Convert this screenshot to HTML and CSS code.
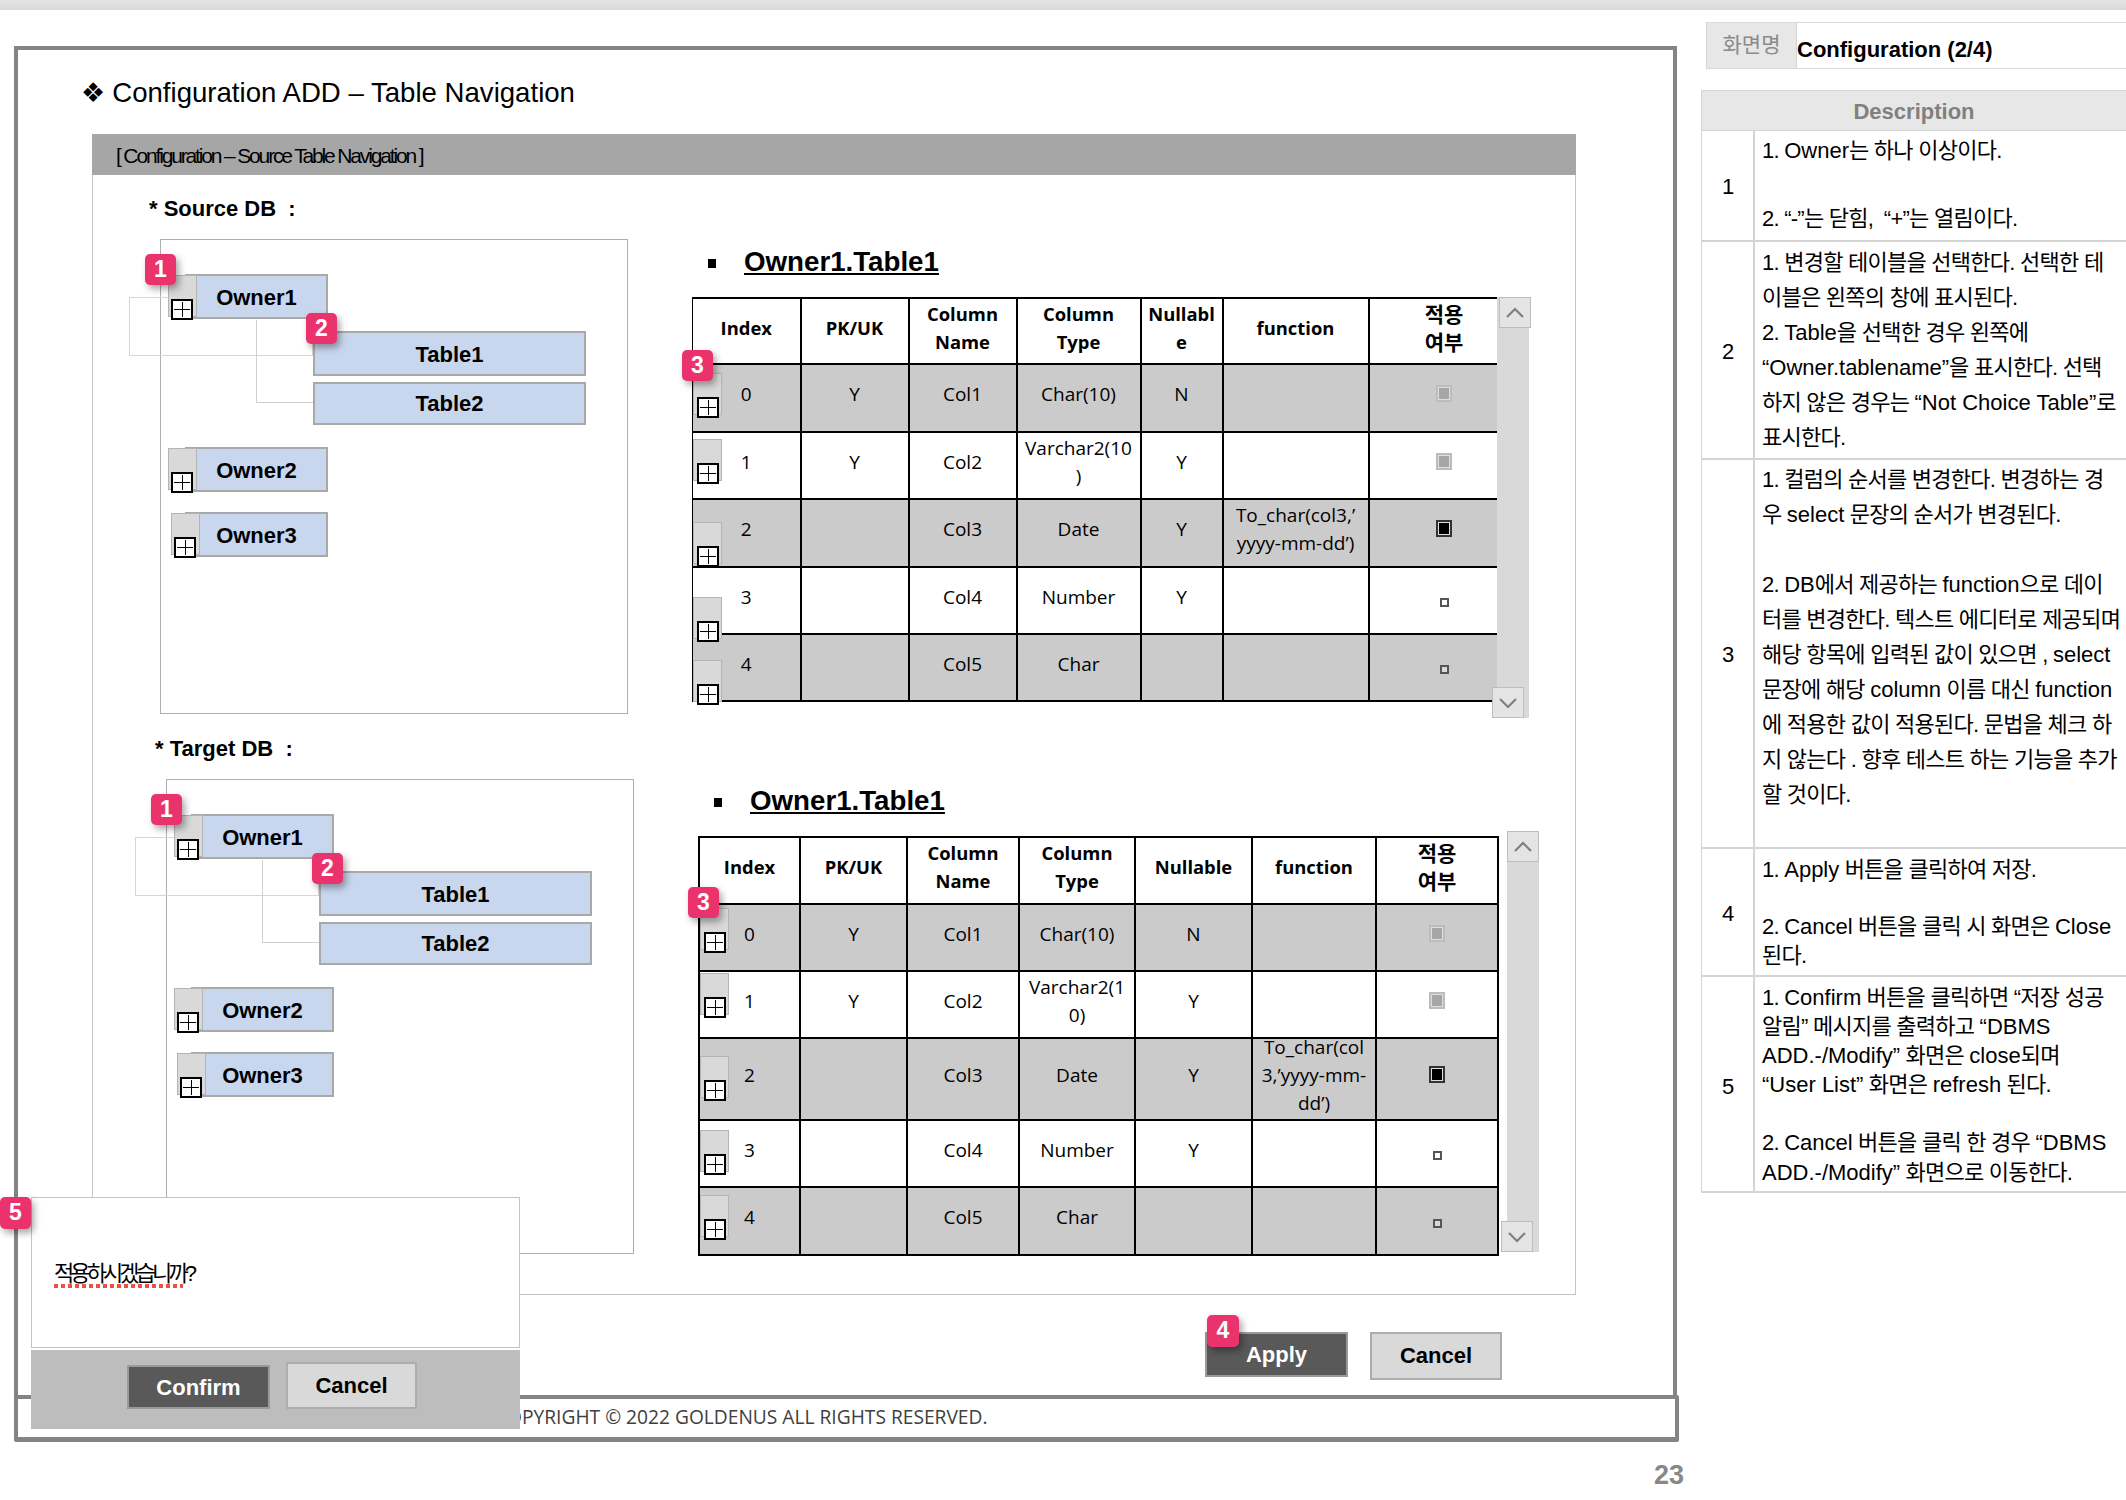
FILE: index.html
```html
<!DOCTYPE html>
<html lang="ko">
<head>
    <meta charset="UTF-8">
    <meta name="viewport" content="width=device-width, initial-scale=1.0">
    <title>Configuration (2/4)</title>
    <link rel="stylesheet" href="styles.css">
</head>
<body>
    <div class="topbar"></div>

    <div class="sheet">
        <div class="slide-wrap">
            <div class="slide">
                <h1 class="slide-title"><span class="diamond">❖</span>Configuration ADD – Table Navigation</h1>

                <div class="panel">
                    <div class="panel-head">[ Configuration – Source Table Navigation ]</div>
                    <div class="panel-body">

                        <div class="db-col">
                            <!-- Source DB -->
                            <section class="db-section">
                                <div class="db-label">* Source DB &nbsp;:</div>
                                <div class="tree">
                                    <span class="ghost-line"></span>
                                    <span class="branch-line"></span>
                                    <div class="node owner">Owner1
                                        <span class="expander"><span class="plus"></span></span>
                                        <span class="badge badge-tree1">1</span>
                                    </div>
                                    <div class="node sub first-sub">Table1
                                        <span class="badge badge-tree2">2</span>
                                    </div>
                                    <div class="node sub second-sub">Table2</div>
                                    <div class="node owner owner2">Owner2
                                        <span class="expander"><span class="plus"></span></span>
                                    </div>
                                    <div class="node owner owner3">Owner3
                                        <span class="expander"><span class="plus"></span></span>
                                    </div>
                                </div>
                            </section>

                            <!-- Target DB -->
                            <section class="db-section db-target">
                                <div class="db-label">* Target DB &nbsp;:</div>
                                <div class="tree">
                                    <span class="ghost-line"></span>
                                    <span class="branch-line"></span>
                                    <div class="node owner">Owner1
                                        <span class="expander"><span class="plus"></span></span>
                                        <span class="badge badge-tree1">1</span>
                                    </div>
                                    <div class="node sub first-sub">Table1
                                        <span class="badge badge-tree2">2</span>
                                    </div>
                                    <div class="node sub second-sub">Table2</div>
                                    <div class="node owner owner2">Owner2
                                        <span class="expander"><span class="plus"></span></span>
                                    </div>
                                    <div class="node owner owner3">Owner3
                                        <span class="expander"><span class="plus"></span></span>
                                    </div>
                                </div>
                            </section>
                        </div>

                        <div class="grid-col">
                            <!-- Source table -->
                            <section class="grid-section">
                                <h2 class="grid-title"><span class="bullet"></span><u>Owner1.Table1</u></h2>
                                <div class="grid-row">
                                    <table class="cols cols-source">
                                        <colgroup><col><col><col><col><col><col><col></colgroup>
                                        <tr class="head">
                                            <th>Index<span class="badge badge-grid">3</span></th><th>PK/UK</th><th>Column<br>Name</th><th>Column<br>Type</th><th>Nullabl<br>e</th><th>function</th><th class="kr">적용<br>여부</th>
                                        </tr>
                                        <tr class="shade">
                                            <td class="idx">0<span class="expander"><span class="plus"></span></span></td><td>Y</td><td>Col1</td><td>Char(10)</td><td>N</td><td></td><td><span class="chk chk-dim"></span></td>
                                        </tr>
                                        <tr>
                                            <td class="idx">1<span class="expander"><span class="plus"></span></span></td><td>Y</td><td>Col2</td><td>Varchar2(10<br>)</td><td>Y</td><td></td><td><span class="chk chk-dim"></span></td>
                                        </tr>
                                        <tr class="shade">
                                            <td class="idx">2<span class="expander"><span class="plus"></span></span></td><td></td><td>Col3</td><td>Date</td><td>Y</td><td>To_char(col3,’<br>yyyy-mm-dd’)</td><td><span class="chk chk-on"></span></td>
                                        </tr>
                                        <tr>
                                            <td class="idx">3<span class="expander"><span class="plus"></span></span></td><td></td><td>Col4</td><td>Number</td><td>Y</td><td></td><td><span class="chk chk-empty"></span></td>
                                        </tr>
                                        <tr class="shade">
                                            <td class="idx">4<span class="expander"><span class="plus"></span></span></td><td></td><td>Col5</td><td>Char</td><td></td><td></td><td><span class="chk chk-empty"></span></td>
                                        </tr>
                                    </table>
                                    <div class="scrollbar">
                                        <span class="scroll-btn scroll-up"><svg width="20" height="12" viewBox="0 0 20 12"><path d="M2 10 L10 2 L18 10" fill="none" stroke="#7f7f7f" stroke-width="2.2"/></svg></span>
                                        <span class="scroll-btn scroll-down"><svg width="20" height="12" viewBox="0 0 20 12"><path d="M2 2 L10 10 L18 2" fill="none" stroke="#7f7f7f" stroke-width="2.2"/></svg></span>
                                    </div>
                                </div>
                            </section>

                            <!-- Target table -->
                            <section class="grid-section grid-target">
                                <h2 class="grid-title"><span class="bullet"></span><u>Owner1.Table1</u></h2>
                                <div class="grid-row">
                                    <table class="cols cols-target">
                                        <colgroup><col><col><col><col><col><col><col></colgroup>
                                        <tr class="head">
                                            <th>Index<span class="badge badge-grid">3</span></th><th>PK/UK</th><th>Column<br>Name</th><th>Column<br>Type</th><th>Nullable</th><th>function</th><th class="kr">적용<br>여부</th>
                                        </tr>
                                        <tr class="shade">
                                            <td class="idx">0<span class="expander"><span class="plus"></span></span></td><td>Y</td><td>Col1</td><td>Char(10)</td><td>N</td><td></td><td><span class="chk chk-dim"></span></td>
                                        </tr>
                                        <tr>
                                            <td class="idx">1<span class="expander"><span class="plus"></span></span></td><td>Y</td><td>Col2</td><td>Varchar2(1<br>0)</td><td>Y</td><td></td><td><span class="chk chk-dim"></span></td>
                                        </tr>
                                        <tr class="shade">
                                            <td class="idx">2<span class="expander"><span class="plus"></span></span></td><td></td><td>Col3</td><td>Date</td><td>Y</td><td><div class="tall">To_char(col<br>3,’yyyy-mm-<br>dd’)</div></td><td><span class="chk chk-on"></span></td>
                                        </tr>
                                        <tr>
                                            <td class="idx">3<span class="expander"><span class="plus"></span></span></td><td></td><td>Col4</td><td>Number</td><td>Y</td><td></td><td><span class="chk chk-empty"></span></td>
                                        </tr>
                                        <tr class="shade">
                                            <td class="idx">4<span class="expander"><span class="plus"></span></span></td><td></td><td>Col5</td><td>Char</td><td></td><td></td><td><span class="chk chk-empty"></span></td>
                                        </tr>
                                    </table>
                                    <div class="scrollbar">
                                        <span class="scroll-btn scroll-up"><svg width="20" height="12" viewBox="0 0 20 12"><path d="M2 10 L10 2 L18 10" fill="none" stroke="#7f7f7f" stroke-width="2.2"/></svg></span>
                                        <span class="scroll-btn scroll-down"><svg width="20" height="12" viewBox="0 0 20 12"><path d="M2 2 L10 10 L18 2" fill="none" stroke="#7f7f7f" stroke-width="2.2"/></svg></span>
                                    </div>
                                </div>
                            </section>
                        </div>

                    </div>
                </div>

                <div class="actions">
                    <button class="btn btn-dark btn-apply">Apply<span class="badge badge-apply">4</span></button>
                    <button class="btn btn-light btn-cancel">Cancel</button>
                </div>
            </div>

            <div class="slide-foot">COPYRIGHT © 2022 GOLDENUS ALL RIGHTS RESERVED.</div>
            <div class="page-no">23</div>

            <!-- 확인 팝업 -->
            <div class="dialog">
                <span class="badge badge-dialog">5</span>
                <div class="dialog-body"><span class="dialog-text">적용하시겠습니까?</span></div>
                <div class="dialog-foot">
                    <button class="btn btn-dark btn-confirm">Confirm</button>
                    <button class="btn btn-light btn-dialog-cancel">Cancel</button>
                </div>
            </div>
        </div>

        <aside class="side">
            <div class="name-row">
                <div class="name-label">화면명</div>
                <div class="name-value">Configuration (2/4)</div>
            </div>

            <div class="desc-head">Description</div>

            <div class="desc-row desc-1">
                <div class="desc-no">1</div>
                <div class="desc-text">1. <span class="en">Owner</span>는 하나 이상이다.<br><br>2. “-”는 닫힘,&nbsp; “+”는 열림이다.</div>
            </div>
            <div class="desc-row desc-2">
                <div class="desc-no">2</div>
                <div class="desc-text">1. 변경할 테이블을 선택한다. 선택한 테<br>이블은 왼쪽의 창에 표시된다.<br>2. <span class="en">Table</span>을 선택한 경우 왼쪽에<br><span class="en">“Owner.tablename”</span>을 표시한다. 선택<br>하지 않은 경우는 <span class="en">“Not Choice Table”</span>로<br>표시한다.</div>
            </div>
            <div class="desc-row desc-3">
                <div class="desc-no">3</div>
                <div class="desc-text">1. 컬럼의 순서를 변경한다. 변경하는 경<br>우 <span class="en">select</span> 문장의 순서가 변경된다.<br><br>2. <span class="en">DB</span>에서 제공하는 <span class="en">function</span>으로 데이<br>터를 변경한다. 텍스트 에디터로 제공되며<br>해당 항목에 입력된 값이 있으면 , <span class="en">select</span><br>문장에 해당 <span class="en">column</span> 이름 대신 <span class="en">function</span><br>에 적용한 값이 적용된다. 문법을 체크 하<br>지 않는다 . 향후 테스트 하는 기능을 추가<br>할 것이다.</div>
            </div>
            <div class="desc-row desc-4">
                <div class="desc-no">4</div>
                <div class="desc-text">1. <span class="en">Apply</span> 버튼을 클릭하여 저장.<br><br>2. <span class="en">Cancel</span> 버튼을 클릭 시 화면은 <span class="en">Close</span><br>된다.</div>
            </div>
            <div class="desc-row desc-5">
                <div class="desc-no">5</div>
                <div class="desc-text">1. <span class="en">Confirm</span> 버튼을 클릭하면 “저장 성공<br>알림” 메시지를 출력하고 <span class="en">“DBMS</span><br><span class="en">ADD.-/Modify”</span> 화면은 <span class="en">close</span>되며<br><span class="en">“User List”</span> 화면은 <span class="en">refresh</span> 된다.<br><br>2. <span class="en">Cancel</span> 버튼을 클릭 한 경우 <span class="en">“DBMS</span><br><span class="en">ADD.-/Modify”</span> 화면으로 이동한다.</div>
            </div>
        </aside>
    </div>
</body>
</html>
```

FILE: styles.css
```css
body {
    margin: 0;
    width: 2126px;
    height: 1500px;
    overflow: hidden;
    background-color: #fff;
    color: #000;
    font-family: "Liberation Sans", "Noto Sans CJK KR", sans-serif;
}

.topbar {
    height: 10px;
    background: linear-gradient(#e6e5e6, #d9d9d9);
}

.sheet {
    display: flex;
    align-items: flex-start;
}

/* Left slide */
.slide-wrap {
    position: relative;
    flex: 0 0 1665px;
    margin: 36px 0 0 14px;
}

.slide {
    box-sizing: border-box;
    width: 1663px;
    height: 1353px;
    border: 4px solid #848484;
    border-bottom: none;
}

.slide-title {
    margin: 26px 0 24px 63px;
    font-size: 27.6px;
    line-height: 34px;
    font-weight: normal;
}

.diamond {
    font-family: "DejaVu Sans", sans-serif;
    font-size: 27px;
    margin-right: 7px;
}

.panel {
    box-sizing: border-box;
    width: 1484px;
    height: 1161px;
    margin-left: 74px;
    border: 1px solid #c4c4c4;
    border-top: none;
}

.panel-head {
    box-sizing: border-box;
    height: 41px;
    margin: 0 -1px;
    padding-left: 24px;
    background-color: #a6a6a6;
    font-size: 21px;
    line-height: 43px;
    letter-spacing: -2.15px;
}

.panel-body {
    display: flex;
    padding-top: 1px;
}

/* DB trees */
.db-col {
    flex: 0 0 599px;
    padding-top: 20px;
}

.db-section {
    margin-bottom: 22px;
}

.db-target {
    margin-left: 6px;
}

.db-label {
    height: 26px;
    margin: 0 0 17px 56px;
    font-size: 22px;
    line-height: 26px;
    font-weight: bold;
}

.tree {
    position: relative;
    box-sizing: border-box;
    width: 468px;
    height: 475px;
    margin-left: 67px;
    padding-top: 34px;
    border: 1px solid #aeaeae;
}

.ghost-line {
    position: absolute;
    left: -32px;
    top: 57px;
    width: 182px;
    height: 57px;
    border: 1px solid #d6d6d6;
}

.branch-line {
    position: absolute;
    left: 95px;
    top: 80px;
    width: 56px;
    height: 82px;
    border-left: 1px solid #d0d0d0;
    border-bottom: 1px solid #d0d0d0;
}

.node {
    position: relative;
    z-index: 1;
    box-sizing: border-box;
    background-color: #c9d7ee;
    border: 2px solid #a9a9a9;
    font-size: 22px;
    font-weight: bold;
    text-align: center;
}

.owner {
    width: 143px;
    height: 45px;
    margin-left: 24px;
    line-height: 43px;
}

.sub {
    width: 273px;
    margin-left: 152px;
}

.first-sub {
    height: 45px;
    margin-top: 12px;
    line-height: 43px;
}

.second-sub {
    height: 43px;
    margin-top: 6px;
    line-height: 40px;
}

.owner2 {
    margin-top: 22px;
}

.owner3 {
    margin-top: 20px;
}

.expander {
    position: absolute;
    z-index: 2;
    box-sizing: border-box;
    width: 29px;
    height: 42px;
    background-color: #d9d9d9;
    border: 1px solid #b4b4b4;
}

.node .expander {
    left: -19px;
    top: -1px;
}

.owner3 .expander {
    left: -16px;
}

.plus {
    position: absolute;
    left: 3px;
    top: 23px;
    box-sizing: border-box;
    width: 22px;
    height: 21px;
    background-color: #fff;
    border: 2px solid #000;
}

.node .plus {
    left: 2px;
}

.plus::before {
    content: "";
    position: absolute;
    left: 1px;
    right: 1px;
    top: 7.5px;
    height: 1.5px;
    background-color: #000;
}

.plus::after {
    content: "";
    position: absolute;
    top: 1px;
    bottom: 1px;
    left: 8.5px;
    width: 1.5px;
    background-color: #000;
}

/* 번호 배지 */
.badge {
    position: absolute;
    z-index: 5;
    width: 31px;
    height: 31px;
    border-radius: 5px;
    background-color: #ea336c;
    box-shadow: 3px 4px 7px rgba(0, 0, 0, 0.35);
    color: #fff;
    font-family: "Liberation Sans", sans-serif;
    font-size: 23px;
    font-weight: bold;
    line-height: 31px;
    text-align: center;
}

.badge-tree1 {
    left: -42px;
    top: -22px;
}

.badge-tree2 {
    left: -9px;
    top: -20px;
}

.badge-grid {
    left: -11px;
    top: 51px;
}

.cols-target .badge-grid {
    left: -12px;
    top: 49px;
}

.badge-apply {
    left: 0;
    top: -19px;
    width: 32px;
    height: 32px;
}

.badge-dialog {
    left: -31px;
    top: 0;
    height: 32px;
}

/* Column tables */
.grid-col {
    flex: 1;
    padding-top: 69px;
}

.grid-section {
    margin-bottom: 66px;
}

.grid-target {
    margin-left: 6px;
}

.grid-title {
    height: 34px;
    margin: 0 0 18px 16px;
    font-size: 27.7px;
    line-height: 34px;
    font-weight: bold;
}

.bullet {
    display: inline-block;
    width: 8px;
    height: 9px;
    margin-right: 28px;
    background-color: #000;
    vertical-align: 3px;
}

.grid-row {
    display: flex;
    align-items: flex-start;
}

.cols {
    border-collapse: collapse;
    table-layout: fixed;
    font-family: "Open Sans", "Noto Sans CJK KR", sans-serif;
    font-size: 19px;
    line-height: 28px;
    text-align: center;
}

.cols th,
.cols td {
    position: relative;
    padding: 0;
    border: 2px solid #000;
    font-weight: normal;
}

.cols td {
    padding-bottom: 8px;
}

.cols th {
    padding-bottom: 7px;
    font-size: 18.4px;
    font-weight: 700;
}

.cols th.kr {
    font-size: 21px;
}

.cols .shade td {
    background-color: #cbcbcb;
}

.cols-source {
    width: 804px;
    height: 403px;
}

.cols-source tr th:last-child,
.cols-source tr td:last-child {
    border-right: none;
    padding-left: 22px;
}

.cols-source tr th:first-child,
.cols-source tr td:first-child {
    border-left-width: 1px;
}

.cols-source col:nth-child(1) { width: 108px; }
.cols-source col:nth-child(2) { width: 108px; }
.cols-source col:nth-child(3) { width: 108px; }
.cols-source col:nth-child(4) { width: 124px; }
.cols-source col:nth-child(5) { width: 82px; }
.cols-source col:nth-child(6) { width: 146px; }
.cols-source col:nth-child(7) { width: 128px; }

.cols-source tr { height: 67px; }
.cols-source tr.head { height: 66px; }
.cols-source tr:nth-child(2),
.cols-source tr:nth-child(4) { height: 68px; }

.cols-target {
    width: 799px;
    height: 418px;
}

.cols-target col:nth-child(1) { width: 101px; }
.cols-target col:nth-child(2) { width: 107px; }
.cols-target col:nth-child(3) { width: 112px; }
.cols-target col:nth-child(4) { width: 116px; }
.cols-target col:nth-child(5) { width: 117px; }
.cols-target col:nth-child(6) { width: 124px; }
.cols-target col:nth-child(7) { width: 122px; }

.cols-target tr { height: 67px; }
.cols-target tr:nth-child(4) { height: 82px; }
.cols-target tr:nth-child(6) { height: 68px; }

.tall {
    height: 78px;
    margin-top: -6px;
}

.idx .expander {
    left: 0;
    width: 29px;
}

.cols-source tr:nth-child(2) .expander { top: 8px; }
.cols-source tr:nth-child(3) .expander { top: 6px; }
.cols-source tr:nth-child(4) .expander { top: 22px; }
.cols-source tr:nth-child(5) .expander { top: 29px; }
.cols-source tr:nth-child(6) .expander { top: 25px; }

.cols-target tr:nth-child(2) .expander { top: 3px; }
.cols-target tr:nth-child(3) .expander { top: 1px; }
.cols-target tr:nth-child(4) .expander { top: 17px; }
.cols-target tr:nth-child(5) .expander { top: 9px; }
.cols-target tr:nth-child(6) .expander { top: 7px; }

.chk {
    display: inline-block;
    box-sizing: border-box;
    width: 16px;
    height: 17px;
    margin-bottom: 4px;
    vertical-align: middle;
}

.chk-dim {
    border: 2px solid #bcbcbc;
    background-color: #a6a6a6;
    box-shadow: inset 0 0 0 1px #dedede;
}

.chk-on {
    border: 2px solid #333;
    background-color: #000;
    box-shadow: inset 0 0 0 1px #ddd;
}

.chk-empty {
    width: 9px;
    height: 9px;
    margin: 9px 0 0;
    border: 2px solid #555;
    background-color: #fff;
}

.shade .chk-empty {
    background-color: #d9d9d9;
}

.scrollbar {
    position: relative;
    flex: 0 0 32px;
    height: 421px;
    background-color: #d9d9d9;
}

.grid-target .scrollbar {
    margin: -5px 0 0 8px;
}

.scroll-btn {
    position: absolute;
    box-sizing: border-box;
    display: flex;
    align-items: center;
    justify-content: center;
    width: 32px;
    height: 31px;
    border: 1px solid #bdbdbd;
}

.scroll-up {
    left: 2px;
    top: 0;
    background-color: #e4e4e4;
}

.scroll-down {
    left: -5px;
    bottom: 0;
    background-color: #e4e4e4;
}

.grid-target .scroll-up {
    left: 0;
}

.grid-target .scroll-down {
    left: -6px;
}

/* Buttons */
.actions {
    display: flex;
    align-items: flex-start;
    justify-content: flex-end;
    gap: 22px;
    margin-top: 37px;
    padding-right: 171px;
}

.btn {
    position: relative;
    box-sizing: border-box;
    padding: 0;
    font-family: "Liberation Sans", sans-serif;
    font-size: 22px;
    font-weight: bold;
    border-width: 2px;
    border-style: solid;
}

.btn-dark {
    background-color: #595959;
    border-color: #9a9a9a;
    color: #fff;
}

.btn-light {
    background-color: #d9d9d9;
    border-color: #adadad;
    color: #000;
}

.btn-apply {
    width: 143px;
    height: 45px;
}

.btn-cancel {
    width: 132px;
    height: 48px;
}

/* Footer */
.slide-foot {
    box-sizing: border-box;
    height: 47px;
    margin-top: -4px;
    padding-left: 477px;
    border: 4px solid #848484;
    border-bottom-width: 5px;
    border-radius: 2px;
    color: #404040;
    font-family: "Open Sans", sans-serif;
    font-size: 19.2px;
    line-height: 36px;
}

.page-no {
    height: 30px;
    margin: 18px -5px 0 0;
    color: #888;
    font-size: 27px;
    line-height: 30px;
    font-weight: bold;
    text-align: right;
}

/* Popup */
.dialog {
    position: absolute;
    z-index: 10;
    left: 17px;
    top: 1151px;
    width: 489px;
}

.dialog-body {
    box-sizing: border-box;
    height: 151px;
    padding: 59px 0 0 22px;
    background-color: #fff;
    border: 1px solid #c4c4c4;
}

.dialog-text {
    position: relative;
    display: block;
    font-size: 22px;
    line-height: 34px;
    letter-spacing: -3.9px;
}

.dialog-text::after {
    content: "";
    position: absolute;
    left: 0;
    top: 27px;
    width: 129px;
    height: 4px;
    background: repeating-linear-gradient(90deg, #ee4f42 0 4px, transparent 4px 7px);
}

.dialog-foot {
    display: flex;
    align-items: flex-start;
    gap: 16px;
    box-sizing: border-box;
    height: 79px;
    margin-top: 2px;
    padding: 12px 0 0 96px;
    background-color: #bdbdbd;
}

.btn-confirm {
    width: 143px;
    height: 44px;
    margin-top: 3px;
    padding-top: 2px;
}

.btn-dialog-cancel {
    width: 131px;
    height: 47px;
    padding-top: 1px;
}

/* Right description */
.side {
    flex: 0 0 425px;
    margin-left: 22px;
}

.name-row {
    display: flex;
    box-sizing: border-box;
    height: 47px;
    margin: 12px 0 0 5px;
    border-top: 1px solid #dadada;
    border-bottom: 1px solid #dadada;
}

.name-label {
    box-sizing: border-box;
    width: 91px;
    background-color: #e7e7e7;
    border-left: 1px solid #d4d4d4;
    border-right: 1px solid #d4d4d4;
    color: #8a8a8a;
    font-size: 21px;
    line-height: 44px;
    text-align: center;
}

.name-value {
    font-size: 22px;
    line-height: 54px;
    font-weight: bold;
}

.desc-head {
    box-sizing: border-box;
    height: 41px;
    margin-top: 21px;
    background-color: #e7e7e7;
    border: 1px solid #d4d4d4;
    border-right: none;
    color: #808080;
    font-size: 22px;
    font-weight: bold;
    line-height: 41px;
    text-align: center;
}

.desc-row {
    display: flex;
    box-sizing: border-box;
    border-left: 1px solid #d4d4d4;
    border-bottom: 2px solid #d4d4d4;
    font-size: 22px;
}

.desc-no {
    display: flex;
    flex: 0 0 53px;
    align-items: center;
    justify-content: center;
    box-sizing: border-box;
    padding: 3px 0 0 1px;
    border-right: 2px solid #d4d4d4;
}

.desc-text {
    padding: 3px 0 0 7px;
    white-space: nowrap;
    letter-spacing: -0.75px;
}

.en {
    letter-spacing: 0;
}

.desc-1 { height: 111px; }
.desc-1 .desc-text { line-height: 34px; }

.desc-2 { height: 218px; }
.desc-2 .desc-text { line-height: 35px; }

.desc-3 { height: 389px; }
.desc-3 .desc-text { padding-top: 2px; line-height: 35px; }

.desc-4 { height: 128px; }
.desc-4 .desc-text { padding-top: 7px; line-height: 28.5px; }

.desc-5 { height: 216px; }
.desc-5 .desc-no { padding-top: 6px; }
.desc-5 .desc-text { padding-top: 6px; line-height: 29.1px; }
```
